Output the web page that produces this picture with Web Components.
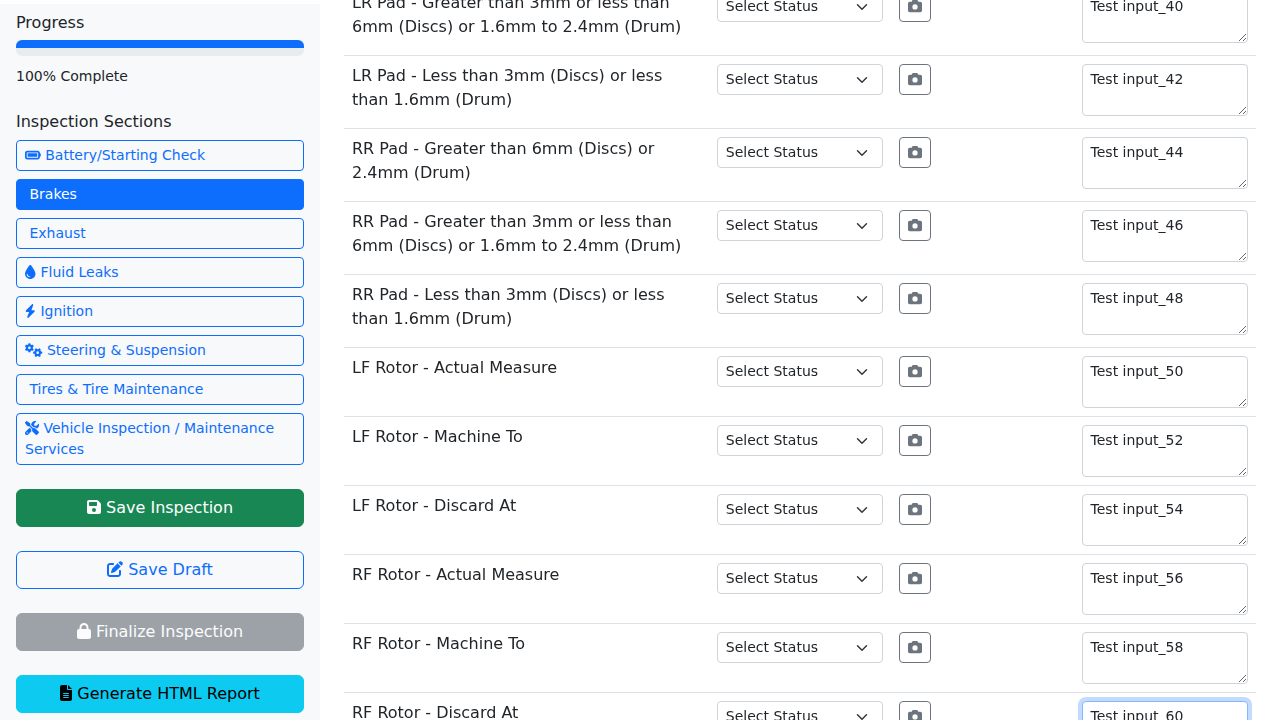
<!DOCTYPE html>
<html lang="en">
<head>
<meta charset="utf-8">
<title>Inspection</title>
<style>
html,body{margin:0;padding:0;height:100%;overflow:hidden;background:#fff;}
body{font-family:"DejaVu Sans",sans-serif;font-size:16px;line-height:1.5;color:#212529;}
</style>
</head>
<body>
<inspection-app>
  <inspection-sidebar slot="side">
    <progress-panel title-text="Progress" value="100"></progress-panel>
    <section-nav>
      <section-button icon="battery">Battery/Starting Check</section-button>
      <section-button active>Brakes</section-button>
      <section-button>Exhaust</section-button>
      <section-button icon="droplet">Fluid Leaks</section-button>
      <section-button icon="bolt">Ignition</section-button>
      <section-button icon="gears">Steering &amp; Suspension</section-button>
      <section-button>Tires &amp; Tire Maintenance</section-button>
      <section-button icon="tools">Vehicle Inspection / Maintenance Services</section-button>
    </section-nav>
    <action-stack>
      <action-button kind="success" icon="floppy">Save Inspection</action-button>
      <action-button kind="outline" icon="pen">Save Draft</action-button>
      <action-button kind="disabled" icon="lock">Finalize Inspection</action-button>
      <action-button kind="info" icon="file">Generate HTML Report</action-button>
    </action-stack>
  </inspection-sidebar>
  <inspection-table slot="main">
    <inspection-row label="LR Pad - Greater than 3mm or less than 6mm (Discs) or 1.6mm to 2.4mm (Drum)" value="Test input_40"></inspection-row>
    <inspection-row label="LR Pad - Less than 3mm (Discs) or less than 1.6mm (Drum)" value="Test input_42"></inspection-row>
    <inspection-row label="RR Pad - Greater than 6mm (Discs) or 2.4mm (Drum)" value="Test input_44"></inspection-row>
    <inspection-row label="RR Pad - Greater than 3mm or less than 6mm (Discs) or 1.6mm to 2.4mm (Drum)" value="Test input_46"></inspection-row>
    <inspection-row label="RR Pad - Less than 3mm (Discs) or less than 1.6mm (Drum)" value="Test input_48"></inspection-row>
    <inspection-row label="LF Rotor - Actual Measure" value="Test input_50"></inspection-row>
    <inspection-row label="LF Rotor - Machine To" value="Test input_52"></inspection-row>
    <inspection-row label="LF Rotor - Discard At" value="Test input_54"></inspection-row>
    <inspection-row label="RF Rotor - Actual Measure" value="Test input_56"></inspection-row>
    <inspection-row label="RF Rotor - Machine To" value="Test input_58"></inspection-row>
    <inspection-row label="RF Rotor - Discard At" value="Test input_60" focused></inspection-row>
  </inspection-table>
</inspection-app>
<script>
const ICONS = {
  battery:[576,"M464 160c8.8 0 16 7.2 16 16V336c0 8.8-7.2 16-16 16H80c-8.8 0-16-7.2-16-16V176c0-8.8 7.2-16 16-16H464zM80 96C35.8 96 0 131.8 0 176V336c0 44.2 35.8 80 80 80H464c44.2 0 80-35.8 80-80V320c17.7 0 32-14.3 32-32V224c0-17.7-14.3-32-32-32V176c0-44.2-35.8-80-80-80H80zm368 96H96V320H448V192z"],
  droplet:[384,"M192 512C86 512 0 426 0 320C0 228.8 130.2 57.7 166.6 11.7C172.6 4.2 181.5 0 191.1 0h1.8c9.6 0 18.5 4.2 24.5 11.7C253.8 57.7 384 228.8 384 320c0 106-86 192-192 192zM96 336c0-8.8-7.2-16-16-16s-16 7.2-16 16c0 61.9 50.1 112 112 112c8.8 0 16-7.2 16-16s-7.2-16-16-16c-44.2 0-80-35.8-80-80z",384,.5],
  bolt:[448,"M349.4 44.6c5.9-13.7 1.5-29.7-10.6-38.5s-28.6-8-39.9 1.8l-256 224c-10 8.8-13.6 22.9-8.9 35.3S50.7 288 64 288H175.5L98.6 467.4c-5.9 13.7-1.5 29.7 10.6 38.5s28.6 8 39.9-1.8l256-224c10-8.8 13.6-22.9 8.9-35.3s-16.6-20.7-30-20.7H272.5L349.4 44.6z",384,.5],
  gears:[640,"M308.5 135.3c7.1-6.3 9.9-16.2 6.2-25c-2.3-5.3-4.8-10.5-7.6-15.5L304 89.4c-3-5-6.3-9.9-9.8-14.6c-5.7-7.6-15.7-10.1-24.7-7.1l-28.2 9.3c-10.7-8.8-23-16-36.2-20.9L199 27.1c-1.9-9.3-9.1-16.7-18.5-17.8C173.9 8.4 167.2 8 160.4 8h-.7c-6.8 0-13.5 .4-20.1 1.2c-9.4 1.1-16.6 8.6-18.5 17.8L115 56.1c-13.3 5-25.5 12.1-36.2 20.9L50.5 67.8c-9-3-19-.5-24.7 7.1c-3.5 4.7-6.8 9.6-9.9 14.6l-3 5.3c-2.8 5-5.3 10.2-7.6 15.6c-3.7 8.7-.9 18.6 6.2 25l22.2 19.8C32.6 161.9 32 168.9 32 176s.6 14.1 1.7 20.9L11.5 216.7c-7.1 6.3-9.9 16.2-6.2 25c2.3 5.3 4.8 10.5 7.6 15.6l3 5.2c3 5.1 6.3 9.9 9.9 14.6c5.7 7.6 15.7 10.1 24.7 7.1l28.2-9.3c10.7 8.8 23 16 36.2 20.9l6.1 29.1c1.9 9.3 9.1 16.7 18.5 17.8c6.7 .8 13.5 1.2 20.4 1.2s13.7-.4 20.4-1.2c9.4-1.1 16.6-8.6 18.5-17.8l6.1-29.1c13.3-5 25.5-12.1 36.2-20.9l28.2 9.3c9 3 19 .5 24.7-7.1c3.5-4.7 6.8-9.5 9.8-14.6l3.1-5.4c2.8-5 5.3-10.2 7.6-15.5c3.7-8.7 .9-18.6-6.2-25l-22.2-19.8c1.1-6.8 1.7-13.8 1.7-20.9s-.6-14.1-1.7-20.9l22.2-19.8zM112 176a48 48 0 1 1 96 0 48 48 0 1 1 -96 0zM504.7 500.5c6.3 7.1 16.2 9.9 25 6.2c5.3-2.3 10.5-4.8 15.5-7.6l5.4-3.1c5-3 9.9-6.3 14.6-9.8c7.6-5.7 10.1-15.7 7.1-24.7l-9.3-28.2c8.8-10.7 16-23 20.9-36.2l29.1-6.1c9.3-1.9 16.7-9.1 17.8-18.5c.8-6.7 1.2-13.5 1.2-20.4s-.4-13.7-1.2-20.4c-1.1-9.4-8.6-16.6-17.8-18.5L583.9 307c-5-13.3-12.1-25.5-20.9-36.2l9.3-28.2c3-9 .5-19-7.1-24.7c-4.7-3.5-9.6-6.8-14.6-9.9l-5.3-3c-5-2.8-10.2-5.3-15.6-7.6c-8.7-3.7-18.6-.9-25 6.2l-19.8 22.2c-6.8-1.1-13.8-1.7-20.9-1.7s-14.1 .6-20.9 1.7l-19.8-22.2c-6.3-7.1-16.2-9.9-25-6.2c-5.3 2.3-10.5 4.8-15.6 7.6l-5.2 3c-5.1 3-9.9 6.3-14.6 9.9c-7.6 5.7-10.1 15.7-7.1 24.7l9.3 28.2c-8.8 10.7-16 23-20.9 36.2L315.1 313c-9.3 1.9-16.7 9.1-17.8 18.5c-.8 6.7-1.2 13.5-1.2 20.4s.4 13.7 1.2 20.4c1.1 9.4 8.6 16.6 17.8 18.5l29.1 6.1c5 13.3 12.1 25.5 20.9 36.2l-9.3 28.2c-3 9-.5 19 7.1 24.7c4.7 3.5 9.5 6.8 14.6 9.8l5.4 3.1c5 2.8 10.2 5.3 15.5 7.6c8.7 3.7 18.6 .9 25-6.2l19.8-22.2c6.8 1.1 13.8 1.7 20.9 1.7s14.1-.6 20.9-1.7l19.8 22.2zM464 304a48 48 0 1 1 0 96 48 48 0 1 1 0-96z"],
  tools:[512,"M78.6 5C69.1-2.4 55.6-1.5 47 7L7 47c-8.5 8.5-9.4 22-2.1 31.6l80 104c4.5 5.9 11.6 9.4 19 9.4h54.1l109 109c-14.7 29-10 65.4 14.3 89.6l112 112c12.5 12.5 32.8 12.5 45.3 0l64-64c12.5-12.5 12.5-32.8 0-45.3l-112-112c-24.2-24.2-60.6-29-89.6-14.3l-109-109V104c0-7.5-3.5-14.5-9.4-19L78.6 5zM19.9 396.1C7.2 408.8 0 426.1 0 444.1C0 481.6 30.4 512 67.9 512c18 0 35.3-7.2 48-19.9L233.7 374.3c-7.8-20.9-9-43.6-3.6-65.1l-61.7-61.7L19.9 396.1zM512 144c0-10.5-1.1-20.7-3.2-30.5c-2.4-11.2-16.1-14.1-24.2-6l-63.9 63.9c-3 3-7.1 4.7-11.3 4.7H352c-8.8 0-16-7.2-16-16V102.6c0-4.2 1.7-8.3 4.7-11.3l63.9-63.9c8.1-8.1 5.2-21.8-6-24.2C388.7 1.1 378.5 0 368 0C288.5 0 224 64.5 224 144l0 .8 85.3 85.3c36-9.1 75.8 .5 104 28.7L429 274.5c49-23 83-72.8 83-130.5zM56 432a24 24 0 1 1 48 0 24 24 0 1 1 -48 0z"],
  floppy:[448,"M64 32C28.7 32 0 60.7 0 96V416c0 35.3 28.7 64 64 64H384c35.3 0 64-28.7 64-64V173.3c0-17-6.7-33.3-18.7-45.3L352 50.7C340 38.7 323.7 32 306.7 32H64zm0 96c0-17.7 14.3-32 32-32H288c17.7 0 32 14.3 32 32v64c0 17.7-14.3 32-32 32H96c-17.7 0-32-14.3-32-32V128zM224 288a64 64 0 1 1 0 128 64 64 0 1 1 0-128z"],
  pen:[512,"M471.6 21.7c-21.9-21.9-57.3-21.9-79.2 0L362.3 51.7l97.9 97.9 30.1-30.1c21.9-21.9 21.9-57.3 0-79.2L471.6 21.7zm-299.2 220c-6.1 6.1-10.8 13.6-13.5 21.9l-29.6 88.8c-2.9 8.6-.6 18.1 5.8 24.6s15.9 8.7 24.6 5.8l88.8-29.6c8.2-2.7 15.7-7.4 21.9-13.5L437.7 172.3 339.7 74.3 172.4 241.7zM96 64C43 64 0 107 0 160V416c0 53 43 96 96 96H352c53 0 96-43 96-96V320c0-17.7-14.3-32-32-32s-32 14.3-32 32v96c0 17.7-14.3 32-32 32H96c-17.7 0-32-14.3-32-32V160c0-17.7 14.3-32 32-32h96c17.7 0 32-14.3 32-32s-14.3-32-32-32H96z"],
  lock:[448,"M144 144v48H304V144c0-44.2-35.8-80-80-80s-80 35.8-80 80zM80 192V144C80 64.5 144.5 0 224 0s144 64.5 144 144v48h16c35.3 0 64 28.7 64 64V448c0 35.3-28.7 64-64 64H64c-35.3 0-64-28.7-64-64V256c0-35.3 28.7-64 64-64H80z"],
  file:[384,"M64 0C28.7 0 0 28.7 0 64V448c0 35.3 28.7 64 64 64H320c35.3 0 64-28.7 64-64V160H256c-17.7 0-32-14.3-32-32V0H64zM256 0V128H384L256 0zM112 256H272c8.8 0 16 7.2 16 16s-7.2 16-16 16H112c-8.8 0-16-7.2-16-16s7.2-16 16-16zm0 64H272c8.8 0 16 7.2 16 16s-7.2 16-16 16H112c-8.8 0-16-7.2-16-16s7.2-16 16-16zm0 64H272c8.8 0 16 7.2 16 16s-7.2 16-16 16H112c-8.8 0-16-7.2-16-16s7.2-16 16-16z"],
  camera:[512,"M149.1 64.8L138.7 96H64C28.7 96 0 124.7 0 160V416c0 35.3 28.7 64 64 64H448c35.3 0 64-28.7 64-64V160c0-35.3-28.7-64-64-64H373.3L362.9 64.8C356.4 45.2 338.1 32 317.4 32H194.6c-20.7 0-39 13.2-45.5 32.8zM256 192a96 96 0 1 1 0 192 96 96 0 1 1 0-192z"]
};
function iconSvg(name){
  if(!name || !ICONS[name]) return '<span class="noicon"></span>';
  const [w,d,adv,extra]=ICONS[name];
  return `<svg class="fa" style="width:${(adv||w)/512}em;margin-right:${extra||0}px" viewBox="0 0 ${w} 512" preserveAspectRatio="none" aria-hidden="true"><path fill="currentColor" d="${d}"/></svg>`;
}
const ICON_CSS = `.fa{height:1em;vertical-align:-.125em;display:inline-block;overflow:visible}.noicon{display:inline-block;width:0}`;

class Base extends HTMLElement{
  constructor(){super();this.attachShadow({mode:"open"});}
}
customElements.define("inspection-app", class extends Base{
  connectedCallback(){this.shadowRoot.innerHTML=`<style>
    :host{display:flex;height:100vh;overflow:hidden;box-sizing:border-box;will-change:opacity}
    .side{flex:0 0 320px;width:320px;padding-top:4px;box-sizing:border-box;display:flex}
    .main{flex:1 1 auto;min-width:0;padding:0 24px;overflow:hidden}
  </style><div class="side"><slot name="side"></slot></div><div class="main"><slot name="main"></slot></div>`;}
});
customElements.define("inspection-sidebar", class extends Base{
  connectedCallback(){this.shadowRoot.innerHTML=`<style>
    :host{display:flex;flex-direction:column;flex:1;background:#f8f9fa;padding:9px 16px 0;box-sizing:border-box;overflow:hidden;
      font-family:"DejaVu Sans",sans-serif;color:#212529}
  </style><slot></slot>`;}
});
customElements.define("progress-panel", class extends Base{
  connectedCallback(){
    const v=this.getAttribute("value");
    this.shadowRoot.innerHTML=`<style>
    :host{display:block}
    h6{margin:0 0 8px;font-size:16px;font-weight:500;line-height:19px}
    .track{height:16px;background:#e9ecef;border-radius:6px;overflow:hidden}
    .bar{height:8px;background:#0d6efd}
    small{display:block;font-size:14px;line-height:21px;margin-top:10px}
  </style><h6>${this.getAttribute("title-text")}</h6><div class="track"><div class="bar" style="width:${v}%"></div></div><small>${v}% Complete</small>`;}
});
customElements.define("section-nav", class extends Base{
  connectedCallback(){this.shadowRoot.innerHTML=`<style>
    :host{display:block;margin-top:25px}
    h6{margin:0 0 9px;font-size:16px;font-weight:500;line-height:19px}
    .list{display:flex;flex-direction:column;gap:8px}
  </style><h6>Inspection Sections</h6><div class="list"><slot></slot></div>`;}
});
customElements.define("section-button", class extends Base{
  connectedCallback(){
    const a=this.hasAttribute("active");
    this.shadowRoot.innerHTML=`<style>
    :host{display:block}
    ${ICON_CSS}
    .b{display:block;box-sizing:border-box;width:100%;border:1px solid #0d6efd;border-radius:4px;padding:4px 8px;font-size:14px;line-height:21px;
       text-align:left;color:${a?"#fff":"#0d6efd"};background:${a?"#0d6efd":"transparent"}}
  </style><div class="b" role="button">${iconSvg(this.getAttribute("icon"))} <slot></slot></div>`;}
});
customElements.define("action-stack", class extends Base{
  connectedCallback(){this.shadowRoot.innerHTML=`<style>
    :host{display:flex;flex-direction:column;gap:24px;margin-top:24px}
  </style><slot></slot>`;}
});
customElements.define("action-button", class extends Base{
  connectedCallback(){
    const kinds={success:"background:#198754;border-color:#198754;color:#fff",
      outline:"background:transparent;border-color:#0d6efd;color:#0d6efd",
      disabled:"background:#6c757d;border-color:#6c757d;color:#fff;opacity:.65",
      info:"background:#0dcaf0;border-color:#0dcaf0;color:#000"};
    this.shadowRoot.innerHTML=`<style>
    :host{display:block}
    ${ICON_CSS}
    .b{box-sizing:border-box;border:1px solid;border-radius:6px;padding:6px 12px;font-size:16px;line-height:24px;text-align:center;${kinds[this.getAttribute("kind")]}}
  </style><div class="b" role="button">${iconSvg(this.getAttribute("icon"))} <slot></slot></div>`;}
});
customElements.define("inspection-table", class extends Base{
  connectedCallback(){this.shadowRoot.innerHTML=`<style>
    :host{display:block;margin-top:-17px}
  </style><slot></slot>`;}
});
const CHEVRON = "data:image/svg+xml,%3csvg xmlns='http://www.w3.org/2000/svg' viewBox='0 0 16 16'%3e%3cpath fill='none' stroke='%23343a40' stroke-linecap='round' stroke-linejoin='round' stroke-width='2' d='m2 5 6 6 6-6'/%3e%3c/svg%3e";
customElements.define("inspection-row", class extends Base{
  connectedCallback(){
    const focused=this.hasAttribute("focused");
    this.shadowRoot.innerHTML=`<style>
    :host{display:grid;grid-template-columns:40% 20% 20% 20%;border-bottom:1px solid #dee2e6;font-family:"DejaVu Sans",sans-serif;color:#212529}
    ${ICON_CSS}
    .c{padding:8px;min-width:0}
    p{margin:0 0 8px;font-size:16px;line-height:24px}
    select{display:block;width:100%;box-sizing:border-box;appearance:none;-webkit-appearance:none;height:31px;margin:0;
      padding:4px 36px 4px 8px;font:14px/21px "DejaVu Sans",sans-serif;color:#212529;background:#fff url("${CHEVRON}") no-repeat right 12px center/16px 12px;
      border:1px solid #ced4da;border-radius:4px;outline:none}
    .cam{display:inline-block;box-sizing:border-box;height:31px;padding:4px 8px;border:1px solid #6c757d;border-radius:4px;font-size:14px;line-height:21px;color:#6c757d;background:transparent}
    textarea{display:block;width:100%;height:52px;box-sizing:border-box;margin:0;padding:4px 8px;font:14px/21px "DejaVu Sans",sans-serif;color:#212529;background:#fff;
      border:1px solid #ced4da;border-radius:4px;resize:vertical;outline:none}
    textarea.f{border-color:#86b7fe;box-shadow:0 0 0 4px rgba(13,110,253,.25)}
  </style>
  <div class="c"><p>${this.getAttribute("label")}</p></div>
  <div class="c"><select><option>Select Status</option></select></div>
  <div class="c"><div class="cam" role="button">${iconSvg("camera")}</div></div>
  <div class="c"><textarea rows="2" class="${focused?"f":""}">${this.getAttribute("value")}</textarea></div>`;}
});
</script>
</body>
</html>
